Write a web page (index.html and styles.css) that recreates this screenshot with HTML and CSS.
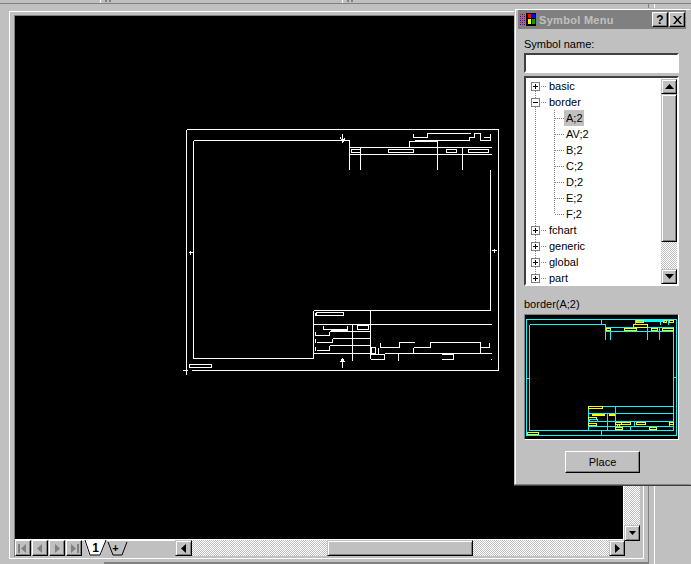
FILE: index.html
```html
<!DOCTYPE html>
<html lang="en">
<head>
<meta charset="utf-8">
<title>Symbol Menu</title>
<link rel="stylesheet" href="styles.css">
</head>
<body>
<div class="app">
  <div class="topstrip">
    <span class="grip grip-a"></span>
    <span class="grip grip-b"></span>
  </div>
  <div class="workspace">
    <div class="main">
    <div class="window">
      <div class="doc">
        <div class="canvas">
          <svg class="drawing" width="608" height="523" viewBox="15 16 608 523">
            <g class="cad" transform="translate(.5 .5)">
              <path d="M186 129H498V370H191M186 129V370"/>
              <path d="M182 370H187M186 370V374"/>
              <path d="M189 364H211V367H189Z"/>
              <path d="M193 140V358H313V310M193 140H349V147H491M349 154H491M349 147V169M360 147V169M437 147V169M462 147V169"/>
              <path d="M342 133V142M340 137L342 142M344 138L342 142"/>
              <path d="M351 149H360V152H351ZM388 149H413V152H388ZM446 149H456V152H446ZM468 149H488V152H468Z"/>
              <path d="M413 133V137H427V133H470M414 140H469V137H474V133H480V140H490V133M483 137H490"/>
              <path d="M409 147V141H437V147M414 141H437"/>
              <path d="M490 169V310H313M313 310V324M313 324H491M370 310V358"/>
              <path d="M316 312H343V315H316ZM315 312V315"/>
              <path d="M323 325V329H347V325M330 330H347M357 325H368V329H357Z"/>
              <path d="M352 324V360"/>
              <path d="M329 331H370M315 331V335H329V331"/>
              <path d="M332 338H370M332 338V342H316M315 338V342"/>
              <path d="M329 345H370M329 345V350H316M315 346V350"/>
              <path d="M313 353H370M384 353H491M313 331V358"/>
              <path d="M371 346V353H375V347H371M378 347V353M380 342V347H399V342H414M413 347V353M413 347H430V342H480V353M480 347H489V342"/>
              <path d="M370 354H384V359H370M398 353V360M441 354H453V359H441M490 359H491"/>
              <path d="M342 358V367M340 362L342 358M344 362L342 358"/>
              <path d="M188 252H193M190 250V254M491 250H496M494 248V252"/>
            </g>
          </svg>
        </div>
        <div class="vscroll">
          <div class="dither"></div>
          <button class="sbtn" type="button"><svg width="9" height="5" viewBox="0 0 9 5"><path class="arrow" d="M1 0H8L4.500 4Z"/></svg></button>
        </div>
        <div class="hbar">
          <div class="nav">
            <button class="navbtn" type="button"><svg width="10" height="9" viewBox="0 0 10 9"><path class="arrow-off" d="M0 0H2V9H0ZM8 0V9L3 4.500Z"/></svg></button>
            <button class="navbtn" type="button"><svg width="10" height="9" viewBox="0 0 10 9"><path class="arrow-off" d="M7 0V9L2 4.500Z"/></svg></button>
            <button class="navbtn" type="button"><svg width="10" height="9" viewBox="0 0 10 9"><path class="arrow-off" d="M3 0V9L8 4.500Z"/></svg></button>
            <button class="navbtn" type="button"><svg width="10" height="9" viewBox="0 0 10 9"><path class="arrow-off" d="M2 0V9L7 4.500ZM8 0H10V9H8Z"/></svg></button>
          </div>
          <svg class="tabs" width="93" height="17" viewBox="82 541 93 17">
            <path class="tab-top" d="M82 541.500H175"/>
            <path class="tab-active" d="M84 541H106L101 556H89Z"/>
            <path class="tab-line" d="M85 541L90 556H100L106 541M108 543L113 556H122L127 543"/>
            <text class="tab-num" x="95.500" y="553" text-anchor="middle">1</text>
            <text class="tab-add" x="115.500" y="553" text-anchor="middle">+</text>
          </svg>
          <button class="sbtn sbtn-wide" type="button"><svg width="5" height="9" viewBox="0 0 5 9"><path class="arrow" d="M5 0V9L0 4.500Z"/></svg></button>
          <div class="dither dither-l"></div>
          <div class="thumb"></div>
          <div class="dither dither-r"></div>
          <button class="sbtn" type="button"><svg width="5" height="9" viewBox="0 0 5 9"><path class="arrow" d="M0 0V9L5 4.500Z"/></svg></button>
          <div class="corner"></div>
        </div>
      </div>
    </div>
    <div class="statusline"></div>
    </div>
    <div class="sidebar"></div>
  </div>

  <aside class="palette">
    <header class="titlebar">
      <svg class="app-icon" width="16" height="13" viewBox="0 0 16 13">
        <path class="dots-r" d="M0 1H1V2H0ZM0 5H1V6H0ZM0 9H1V10H0ZM2 3H3V4H2ZM2 7H3V8H2ZM2 11H3V12H2ZM4 1H5V2H4ZM4 5H5V6H4ZM4 9H5V10H4Z"/>
        <path class="dots-b" d="M0 3H1V4H0ZM0 7H1V8H0ZM0 11H1V12H0ZM2 1H3V2H2ZM2 5H3V6H2ZM2 9H3V10H2ZM4 3H5V4H4ZM4 7H5V8H4ZM4 11H5V12H4Z"/>
        <rect class="ic-k" x="6" y="0" width="10" height="13"/>
        <rect class="ic-red" x="8" y="1" width="3" height="4"/>
        <rect class="ic-blue" x="12" y="1" width="3" height="4"/>
        <rect class="ic-yel" x="8" y="6" width="3" height="5"/>
        <rect class="ic-grn" x="12" y="6" width="3" height="5"/>
      </svg>
      <span class="title-text">Symbol Menu</span>
      <button class="capbtn capbtn-help" type="button">?</button>
      <button class="capbtn" type="button"><svg width="9" height="8" viewBox="0 0 9 8"><path class="cross" d="M0 0H2L4.500 3L7 0H9L5.500 4L9 8H7L4.500 5L2 8H0L3.500 4Z"/></svg></button>
    </header>
    <label class="lbl lbl-name" for="symname">Symbol name:</label>
    <input class="namebox" id="symname" type="text">
    <div class="tree">
      <svg class="guides" width="60" height="206" viewBox="526 78 60 206">
        <path d="M535.500 91V280M554.500 110V214M541 86.500H546M541 102.500H546M555 118.500H564M555 134.500H564M555 150.500H564M555 166.500H564M555 182.500H564M555 198.500H564M555 214.500H564M541 230.500H546M541 246.500H546M541 262.500H546M541 278.500H546"/>
      </svg>
      <ul class="items">
        <li class="row"><span class="box box-plus"></span><span class="name">basic</span></li>
        <li class="row"><span class="box"></span><span class="name">border</span></li>
        <li class="row child"><span class="name sel">A;2</span></li>
        <li class="row child"><span class="name">AV;2</span></li>
        <li class="row child"><span class="name">B;2</span></li>
        <li class="row child"><span class="name">C;2</span></li>
        <li class="row child"><span class="name">D;2</span></li>
        <li class="row child"><span class="name">E;2</span></li>
        <li class="row child"><span class="name">F;2</span></li>
        <li class="row"><span class="box box-plus"></span><span class="name">fchart</span></li>
        <li class="row"><span class="box box-plus"></span><span class="name">generic</span></li>
        <li class="row"><span class="box box-plus"></span><span class="name">global</span></li>
        <li class="row"><span class="box box-plus"></span><span class="name">part</span></li>
      </ul>
      <div class="tree-scroll">
        <button class="sbtn sbtn-tree" type="button"><svg width="9" height="5" viewBox="0 0 9 5"><path class="arrow" d="M4.500 0L9 5H0Z"/></svg></button>
        <div class="thumb thumb-tree"></div>
        <div class="dither"></div>
        <button class="sbtn sbtn-tree" type="button"><svg width="9" height="5" viewBox="0 0 9 5"><path class="arrow" d="M0 0H9L4.500 5Z"/></svg></button>
      </div>
    </div>
    <div class="lbl lbl-prev">border(A;2)</div>
    <div class="preview">
      <svg width="153" height="124" viewBox="525 315 153 124">
        <g class="pv-c" transform="translate(.5 .5)">
          <path d="M526 319H676V435H526Z"/>
          <path d="M529 324V430H673V327H605V324H529M605 327V339M610 327V339M605 331H673M647 327V339M659 327V339"/>
          <path d="M601 319V324H603M635 320H670M635 319V324M660 319V324M668 319V324"/>
          <path d="M588 406H673M588 413H673M588 421H673M588 426H673M588 406V430M615 406V426M607 413V430M615 421H673M634 421V426M669 421V426M630 426V430M601 430V435H603M526 378H529M673 377H676"/>
          <path class="pv-thick" d="M635 320H664"/>
        </g>
        <g class="pv-y" transform="translate(.5 .5)">
          <path d="M636 320H643V322H636ZM633 324H647V327H633ZM663 320H666V322H663ZM669 320H673V322H669Z"/>
          <path d="M606 328H610V330H606ZM624 328H636V330H624ZM651 328H657V330H651ZM662 328H673V330H662Z"/>
          <path d="M588 406H602V408H588ZM592 414H604V415H592ZM609 414H614V415H609ZM588 417H596V419H588ZM588 423H596V425H588Z"/>
          <path d="M615 422H621V424H615ZM621 422H630V424H621ZM636 422H645V424H636ZM669 422H673V424H669ZM617 424V427M619 424V427M615 427H622V429H615ZM649 427H656V429H649ZM527 432H538V434H527Z"/>
        </g>
        <path class="pv-cy2" d="M589.500 419.500H597V421.500H589.500Z"/>
      </svg>
    </div>
    <div class="actions"><button class="place" type="button">Place</button></div>
  </aside>
</div>
</body>
</html>
```
FILE: styles.css
```css
* { box-sizing: border-box; }
html, body { margin: 0; padding: 0; }
body {
  width: 691px;
  height: 564px;
  overflow: hidden;
  background: #c0c0c0;
  font: 11px/14px "Liberation Sans", Arial, sans-serif;
  color: #000;
}
button { font: inherit; padding: 0; margin: 0; color: #000; }
svg { display: block; }

.app { position: relative; width: 691px; height: 564px; overflow: hidden; }

.topstrip {
  height: 4px;
  border-bottom: 1px solid #808080;
  display: flex;
}
.grip {
  width: 12px;
  height: 3px;
  border-left: 1px solid #fff;
  background: linear-gradient(90deg, transparent 4px, #808080 4px, #808080 6px, transparent 6px, transparent 8px, #808080 8px, #808080 10px, transparent 10px) 0 0 / 100% 2px no-repeat;
}
.grip-a { margin-left: 100px; }
.grip-b { margin-left: 230px; }

.workspace {
  display: flex;
  height: 560px;
  padding: 7px 0 0 9px;
}
.main { width: 639px; flex: none; }
.window {
  width: 635px;
  height: 548px;
  border: 1px solid #fff;
  padding: 3px 3px 0 4px;
}
.statusline {
  height: 2px;
  margin: 3px 0 0 95px;
  background: #808080;
}
.doc {
  display: grid;
  grid-template-columns: 609px 16px;
  grid-template-rows: 524px 17px;
  width: 626px;
  border-top: 1px solid #808080;
  border-left: 1px solid #808080;
}
.canvas {
  width: 609px;
  height: 524px;
  background: #000;
  border-right: 1px solid #fff;
  border-bottom: 1px solid #fff;
}
.cad path { fill: none; stroke: #fff; stroke-width: 1; shape-rendering: crispEdges; }

.dither {
  flex: 1;
  background: conic-gradient(#c0c0c0 25%, #fff 0 50%, #c0c0c0 0 75%, #fff 0) 0 0 / 2px 2px;
}
.vscroll { display: flex; flex-direction: column; height: 525px; }
.sbtn {
  width: 16px;
  height: 16px;
  flex: none;
  display: flex;
  align-items: center;
  justify-content: center;
  background: #c0c0c0;
  border: 1px solid;
  border-color: #c0c0c0 #000 #000 #c0c0c0;
  box-shadow: inset 1px 1px 0 #fff, inset -1px -1px 0 #808080;
}
.sbtn-wide { width: 17px; }
.arrow { fill: #000; }
.arrow-off { fill: #808080; }

.hbar { grid-column: 1 / -1; display: flex; height: 17px; }
.nav { display: flex; gap: 1px; }
.navbtn {
  width: 16px;
  height: 16px;
  display: flex;
  align-items: center;
  justify-content: center;
  background: #c0c0c0;
  border: 1px solid;
  border-color: #fff #000 #000 #fff;
  box-shadow: inset -1px -1px 0 #808080;
}
.tabs { flex: none; }
.tab-top { stroke: #fff; fill: none; shape-rendering: crispEdges; }
.tab-active { fill: #fff; }
.tab-line { fill: none; stroke: #000; stroke-width: 1; }
.tab-num { font: bold 12px "Liberation Sans", Arial, sans-serif; fill: #000; }
.tab-add { font: bold 11px "Liberation Sans", Arial, sans-serif; fill: #000; }
.dither-l { flex: none; width: 135px; height: 16px; }
.dither-r { flex: none; width: 136px; height: 16px; }
.thumb {
  background: #c0c0c0;
  border: 1px solid;
  border-color: #c0c0c0 #000 #000 #c0c0c0;
  box-shadow: inset 1px 1px 0 #fff, inset -1px -1px 0 #808080;
  width: 146px;
  height: 16px;
  flex: none;
}
.corner { width: 15px; }

.sidebar {
  width: 7px;
  height: 560px;
  border-left: 1px solid #808080;
  border-right: 1px solid #fff;
  margin-top: -7px;
  flex: none;
}

.palette {
  position: absolute;
  left: 514px;
  top: 8px;
  width: 177px;
  height: 477px;
  padding: 1px 4px 0 3px;
  display: flex;
  flex-direction: column;
  background: #c0c0c0;
  border: 1px solid;
  border-color: #c0c0c0 #c0c0c0 #808080 #c0c0c0;
  box-shadow: inset 1px 1px 0 #fff, 0 1px 0 #404040;
}
.titlebar {
  height: 19px;
  flex: none;
  display: flex;
  align-items: center;
  background: #808080;
  padding: 0 1px 0 2px;
}
.app-icon { margin-right: 3px; flex: none; }
.dots-r { fill: #ff0000; }
.dots-b { fill: #0000ff; }
.ic-k { fill: #000; }
.ic-red { fill: #ff0000; }
.ic-blue { fill: #0000ff; }
.ic-yel { fill: #ffff00; }
.ic-grn { fill: #00a000; }
.title-text {
  flex: 1;
  color: #c0c0c0;
  font-weight: bold;
  letter-spacing: .3px;
}
.capbtn {
  width: 16px;
  height: 15px;
  flex: none;
  margin-left: 1px;
  display: flex;
  align-items: center;
  justify-content: center;
  font-weight: bold;
  font-size: 12px;
  background: #c0c0c0;
  border: 1px solid;
  border-color: #fff #000 #000 #fff;
  box-shadow: inset -1px -1px 0 #808080;
}
.cross { fill: #000; }

.lbl { display: block; margin-left: 6px; height: 14px; flex: none; }
.lbl-name { margin-top: 8px; }
.namebox {
  display: block;
  flex: none;
  width: 155px;
  height: 20px;
  margin: 2px 0 3px 6px;
  padding: 0;
  background: #fff;
  border: 2px solid;
  border-color: #404040 #fff #fff #404040;
  outline: none;
  border-radius: 0;
}
.tree {
  position: relative;
  flex: none;
  width: 155px;
  height: 210px;
  margin-left: 6px;
  background: #fff;
  border: 2px solid;
  border-color: #404040 #fff #fff #404040;
  overflow: hidden;
}
.guides { position: absolute; left: 0; top: 0; }
.guides path { fill: none; stroke: #808080; stroke-dasharray: 1 1; shape-rendering: crispEdges; }
.items { list-style: none; margin: 0; padding: 0; position: relative; }
.row { height: 16px; display: flex; align-items: center; padding-left: 5px; }
.child { padding-left: 38px; }
.box {
  position: relative;
  width: 9px;
  height: 9px;
  flex: none;
  margin-right: 7px;
  background: #fff;
  border: 1px solid #808080;
}
.box::before {
  content: "";
  position: absolute;
  left: 1px;
  top: 3px;
  width: 5px;
  height: 1px;
  background: #000;
}
.box-plus::after {
  content: "";
  position: absolute;
  left: 3px;
  top: 1px;
  width: 1px;
  height: 5px;
  background: #000;
}
.name { display: block; height: 16px; line-height: 16px; padding: 0 2px; }
.sel { background: #c0c0c0; width: 20px; }
.tree-scroll {
  position: absolute;
  right: 0;
  top: 1px;
  width: 16px;
  height: 205px;
  display: flex;
  flex-direction: column;
}
.sbtn-tree { width: 16px; height: 15px; }
.thumb-tree { width: 16px; height: 148px; }
.lbl-prev { margin-top: 11px; }
.preview {
  flex: none;
  width: 155px;
  height: 126px;
  margin: 3px 0 0 6px;
  background: #000;
  border: 1px solid;
  border-color: #808080 #fff #fff #808080;
}
.pv-c path { fill: none; stroke: #00ffff; stroke-width: 1; shape-rendering: crispEdges; }
.pv-c .pv-thick { stroke-width: 2; }
.pv-y path { fill: none; stroke: #ffff00; stroke-width: 1; shape-rendering: crispEdges; }
.pv-cy2 { fill: none; stroke: #00ffff; shape-rendering: crispEdges; }
.actions { display: flex; justify-content: flex-start; padding: 11px 0 0 47px; }
.place {
  width: 75px;
  height: 22px;
  background: #c0c0c0;
  border: 1px solid;
  border-color: #fff #000 #000 #fff;
  box-shadow: inset -1px -1px 0 #808080;
}
```
